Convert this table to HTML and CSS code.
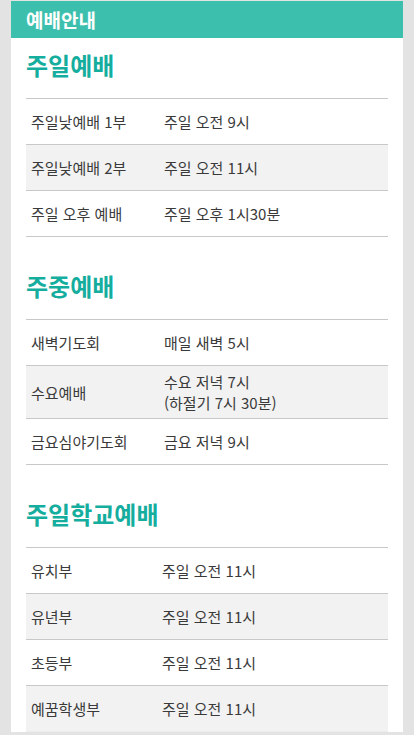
FILE: index.html
```html
<!DOCTYPE html>
<html lang="ko">
<head>
<meta charset="utf-8">
<title>예배안내</title>
<link rel="stylesheet" href="styles.css">
</head>
<body>
<div class="panel">
  <header class="bar">예배안내</header>
  <main class="content">
    <section class="sec first">
      <h2 class="title">주일예배</h2>
      <table class="tbl">
        <tr><td class="name w133">주일낮예배 1부</td><td>주일 오전 9시</td></tr>
        <tr class="alt"><td class="name">주일낮예배 2부</td><td>주일 오전 11시</td></tr>
        <tr><td class="name">주일 오후 예배</td><td>주일 오후 1시30분</td></tr>
      </table>
    </section>
    <section class="sec">
      <h2 class="title">주중예배</h2>
      <table class="tbl">
        <tr><td class="name w133">새벽기도회</td><td>매일 새벽 5시</td></tr>
        <tr class="alt"><td class="name">수요예배</td><td>수요 저녁 7시<br>(하절기 7시 30분)</td></tr>
        <tr><td class="name">금요심야기도회</td><td>금요 저녁 9시</td></tr>
      </table>
    </section>
    <section class="sec">
      <h2 class="title">주일학교예배</h2>
      <table class="tbl last">
        <tr><td class="name w131">유치부</td><td>주일 오전 11시</td></tr>
        <tr class="alt"><td class="name">유년부</td><td>주일 오전 11시</td></tr>
        <tr><td class="name">초등부</td><td>주일 오전 11시</td></tr>
        <tr class="alt"><td class="name">예꿈학생부</td><td>주일 오전 11시</td></tr>
      </table>
    </section>
  </main>
</div>
</body>
</html>
```
FILE: styles.css
```css
html, body {
  margin: 0;
  padding: 0;
  background: #e3e3e3;
}
body {
  font-family: "Noto Sans CJK KR", "Noto Sans", sans-serif;
  color: #333;
  padding-top: 1px;
}
.panel {
  margin: 0 11px;
  background: #fff;
}
.bar {
  height: 37px;
  background: #3dbfae;
  color: #fff;
  font-size: 19px;
  font-weight: bold;
  line-height: 37px;
  padding-left: 15px;
}
.content {
  padding: 0 15px;
}
.sec {
  margin-top: 34px;
}
.sec.first {
  margin-top: 12px;
}
.title {
  margin: 0 0 18px;
  font-size: 24px;
  line-height: 30px;
  font-weight: bold;
  color: #14ad9e;
}
.tbl {
  width: 100%;
  border-collapse: collapse;
  font-size: 15px;
  line-height: 21px;
  color: #3a3a3a;
  border-bottom: 1px solid #c8c8c8;
}
.tbl.last {
  border-bottom-color: #ececec;
}
.tbl tr {
  border-top: 1px solid #c8c8c8;
  height: 46px;
}
.tbl tr.alt {
  background: #f2f2f2;
}
.tbl td {
  padding: 5px 5px;
  vertical-align: middle;
}
.tbl .w133 {
  width: 123px;
}
.tbl .w131 {
  width: 121px;
}
```
